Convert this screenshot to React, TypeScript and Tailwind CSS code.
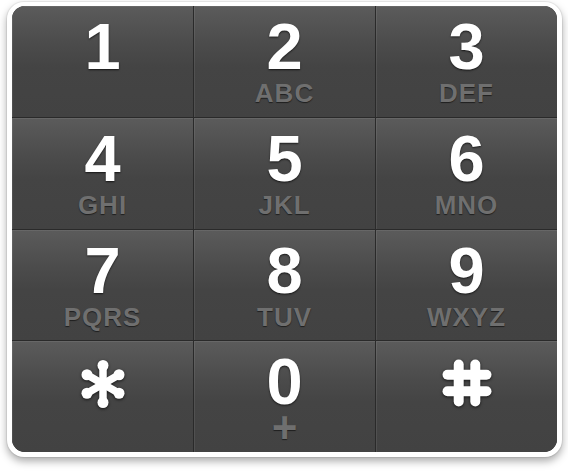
const keys: { d: string; sub?: string }[] = [
  { d: "1" },
  { d: "2", sub: "ABC" },
  { d: "3", sub: "DEF" },
  { d: "4", sub: "GHI" },
  { d: "5", sub: "JKL" },
  { d: "6", sub: "MNO" },
  { d: "7", sub: "PQRS" },
  { d: "8", sub: "TUV" },
  { d: "9", sub: "WXYZ" },
];

function Asterisk() {
  const arms = [0, 60, 120, 180, 240, 300];
  return (
    <svg width="50" height="50" viewBox="0 0 50 50" aria-label="*">
      <g fill="#fff" stroke="#fff" strokeLinecap="round">
        {arms.map((a) => {
          const r = (a * Math.PI) / 180;
          const x = 25 + Math.sin(r) * 18.5;
          const y = 25 - Math.cos(r) * 18.5;
          return (
            <g key={a}>
              <line x1="25" y1="25" x2={x} y2={y} strokeWidth="7.5" />
              <circle cx={x} cy={y} r="5.5" stroke="none" />
            </g>
          );
        })}
      </g>
    </svg>
  );
}

function Hash() {
  return (
    <svg width="50" height="48" viewBox="0 0 50 48" aria-label="#">
      <g stroke="#fff" strokeWidth="10" strokeLinecap="round">
        <line x1="16.7" y1="5.5" x2="16.7" y2="42.5" />
        <line x1="33.3" y1="5.5" x2="33.3" y2="42.5" />
        <line x1="5.5" y1="15.7" x2="44.5" y2="15.7" />
        <line x1="5.5" y1="32.3" x2="44.5" y2="32.3" />
      </g>
    </svg>
  );
}

const cell =
  "flex flex-col items-center bg-[linear-gradient(to_bottom,#5b5b5b_0%,#4b4b4b_35%,#444444_55%,#424242_100%)] shadow-[inset_1px_1px_0_rgba(255,255,255,0.08)]";
const digit =
  "text-[65px] leading-none font-bold text-white [text-shadow:0_1px_2px_rgba(0,0,0,0.7)]";
const letters =
  "mt-[1px] text-[26px] leading-none font-bold tracking-[1px] text-[#6f6f6f] [text-shadow:0_1px_1px_rgba(0,0,0,0.55)]";

export default function App() {
  return (
    <div className="w-[568px] h-[476px] bg-white pt-[2px] pl-[7px] font-['Liberation_Sans',Arial,sans-serif]">
      <div className="w-[555px] h-[455px] rounded-[17px] bg-white pt-[4px] px-[5px] pb-[5px] shadow-[0_0_0_1px_rgba(0,0,0,0.06),0_4px_9px_rgba(0,0,0,0.35)]">
        <div className="grid h-full grid-cols-3 grid-rows-4 gap-px overflow-hidden rounded-[13px] bg-[#2a2a2a]">
          {keys.map((k) => (
            <div key={k.d} className={`${cell} pt-[8px]`}>
              <div className={digit}>{k.d}</div>
              {k.sub && <div className={letters}>{k.sub}</div>}
            </div>
          ))}
          <div className={`${cell} pt-[18px]`}>
            <div className="[filter:drop-shadow(0_1px_1.5px_rgba(0,0,0,0.7))]">
              <Asterisk />
            </div>
          </div>
          <div className={`${cell} pt-[8px]`}>
            <div className={digit}>0</div>
            <div className="mt-[-8px] text-[44px] leading-none font-bold text-[#6f6f6f] [text-shadow:0_1px_1px_rgba(0,0,0,0.55)]">
              +
            </div>
          </div>
          <div className={`${cell} pt-[18px]`}>
            <div className="[filter:drop-shadow(0_1px_1.5px_rgba(0,0,0,0.7))]">
              <Hash />
            </div>
          </div>
        </div>
      </div>
    </div>
  );
}
